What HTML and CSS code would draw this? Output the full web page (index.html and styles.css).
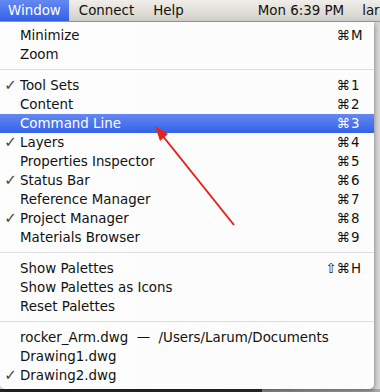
FILE: index.html
```html
<!DOCTYPE html>
<html lang="en">
<head>
  <meta charset="UTF-8" />
  <title>Window Menu</title>
  <link rel="stylesheet" href="styles.css">
</head>
<body>
  <div class="screen">
    <div class="menubar">
      <span class="bar-item open">Window</span>
      <span class="bar-item">Connect</span>
      <span class="bar-item">Help</span>
      <div class="status">
        <span class="clock">Mon 6:39 PM</span>
        <span class="user">larum</span>
      </div>
    </div>

    <div class="desk">
      <div class="menu">
        <div class="item"><span class="check"></span><span class="label">Minimize</span><span class="keys"><span class="mod">⌘</span><span class="key">M</span></span></div>
        <div class="item"><span class="check"></span><span class="label">Zoom</span></div>
        <div class="sep"></div>
        <div class="item"><span class="check">✓</span><span class="label">Tool Sets</span><span class="keys"><span class="mod">⌘</span><span class="key">1</span></span></div>
        <div class="item"><span class="check"></span><span class="label">Content</span><span class="keys"><span class="mod">⌘</span><span class="key">2</span></span></div>
        <div class="item active"><span class="check"></span><span class="label">Command Line</span><span class="keys"><span class="mod">⌘</span><span class="key">3</span></span></div>
        <div class="item"><span class="check">✓</span><span class="label">Layers</span><span class="keys"><span class="mod">⌘</span><span class="key">4</span></span></div>
        <div class="item"><span class="check"></span><span class="label">Properties Inspector</span><span class="keys"><span class="mod">⌘</span><span class="key">5</span></span></div>
        <div class="item"><span class="check">✓</span><span class="label">Status Bar</span><span class="keys"><span class="mod">⌘</span><span class="key">6</span></span></div>
        <div class="item"><span class="check"></span><span class="label">Reference Manager</span><span class="keys"><span class="mod">⌘</span><span class="key">7</span></span></div>
        <div class="item"><span class="check">✓</span><span class="label">Project Manager</span><span class="keys"><span class="mod">⌘</span><span class="key">8</span></span></div>
        <div class="item"><span class="check"></span><span class="label">Materials Browser</span><span class="keys"><span class="mod">⌘</span><span class="key">9</span></span></div>
        <div class="sep"></div>
        <div class="item"><span class="check"></span><span class="label">Show Palettes</span><span class="keys"><span class="mod">⇧⌘</span><span class="key">H</span></span></div>
        <div class="item"><span class="check"></span><span class="label">Show Palettes as Icons</span></div>
        <div class="item"><span class="check"></span><span class="label">Reset Palettes</span></div>
        <div class="sep"></div>
        <div class="item"><span class="check"></span><span class="label">rocker_Arm.dwg &nbsp;—&nbsp; /Users/Larum/Documents</span></div>
        <div class="item"><span class="check"></span><span class="label">Drawing1.dwg</span></div>
        <div class="item"><span class="check">✓</span><span class="label">Drawing2.dwg</span></div>
      </div>
      <div class="floor"></div>
    </div>

    <!-- annotation arrow drawn over the screenshot -->
    <svg class="arrow" width="380" height="392" viewBox="0 0 380 392">
      <line x1="234" y1="225" x2="162" y2="135" stroke="#e3241b" stroke-width="2" />
      <polygon points="155,126 168,134 160,141" fill="#e3241b" />
    </svg>
  </div>
</body>
</html>
```

FILE: styles.css
```css
:root {
  --ink: #111;
  --mac-blue-top: #6489f1;
  --mac-blue-bottom: #3461ea;
  --sep: #dedede;
}

body, html {
  margin: 0;
  padding: 0;
  background: #e4e4e4;
  font-family: 'DejaVu Sans', 'Liberation Sans', sans-serif;
  font-size: 13.4px;
  color: var(--ink);
}

.screen {
  position: relative;
  width: 380px;
  height: 392px;
  overflow: hidden;
  display: flex;
  flex-direction: column;
}

/* Top menu bar */

.menubar {
  height: 21px;
  flex: none;
  display: flex;
  align-items: center;
  background: linear-gradient(to bottom, #f0eeea 0%, #e2dfd8 50%, #d2d0cc 100%);
  border-bottom: 1px solid #9b9b9b;
  white-space: nowrap;
}

.bar-item {
  height: 21px;
  line-height: 21px;
  padding: 0 9px;
  margin-right: 1px;
}

.bar-item.open {
  padding: 0 8px;
  color: #fff;
  background: linear-gradient(to bottom, var(--mac-blue-top), var(--mac-blue-bottom));
}

.status {
  margin-left: 64px;
  display: flex;
  gap: 18px;
}

/* Desktop area below the bar */

.desk {
  flex: 1;
  display: flex;
  flex-direction: column;
  background: linear-gradient(to right, #e9e9e9, #d9d9d9);
}

.menu {
  width: 374px;
  padding: 4px 0;
  background: rgba(253, 253, 253, 0.97);
  border-radius: 0 0 5px 5px;
  box-shadow: 1px 2px 5px rgba(0, 0, 0, 0.35);
  position: relative;
  z-index: 2;
}

.item {
  display: grid;
  grid-template-columns: 20px 1fr auto;
  align-items: center;
  height: 19px;
  padding-right: 11px;
  white-space: nowrap;
}

.item.active {
  color: #fff;
  background: linear-gradient(to bottom, var(--mac-blue-top), var(--mac-blue-bottom));
}

.check {
  text-align: center;
  padding-left: 1px;
  color: #444;
  font-size: 15px;
  line-height: 19px;
}

.keys {
  display: flex;
}

.mod {
  text-align: right;
}

.key {
  width: 12px;
  padding-left: 1px;
}

.sep {
  height: 1px;
  margin: 5px 0 6px;
  background: var(--sep);
}

.floor {
  flex: 1;
  background: linear-gradient(to right, #262626 0, #2c2c2c 262px, #8c8c8c 262px, #a8a8a8 100%);
}

.arrow {
  position: absolute;
  top: 0;
  left: 0;
  pointer-events: none;
  z-index: 5;
}
```
